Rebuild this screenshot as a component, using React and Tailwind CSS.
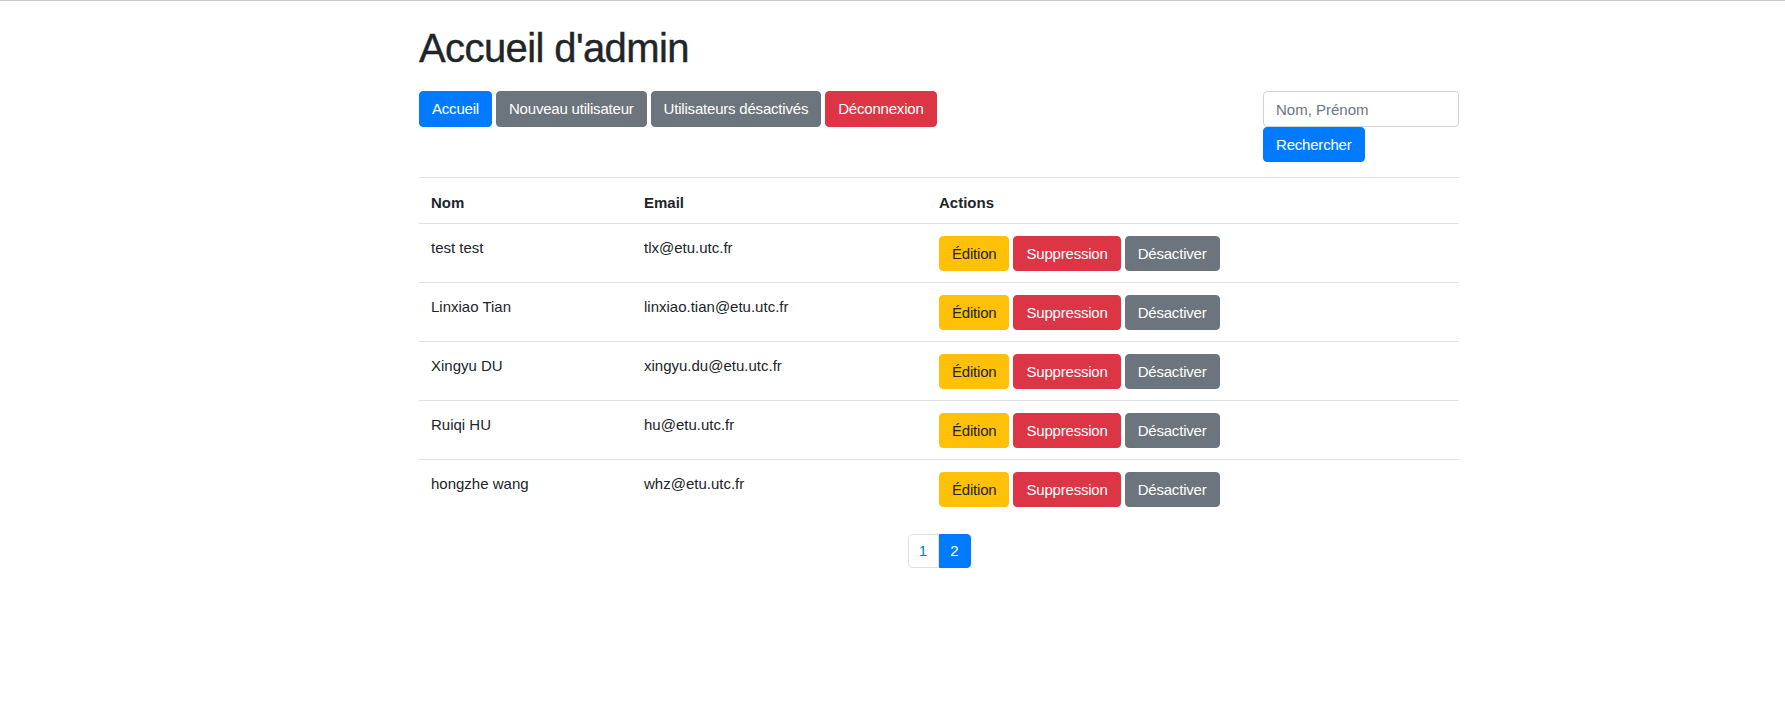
import React from "react";

const users = [
  { name: "test test", email: "tlx@etu.utc.fr" },
  { name: "Linxiao Tian", email: "linxiao.tian@etu.utc.fr" },
  { name: "Xingyu DU", email: "xingyu.du@etu.utc.fr" },
  { name: "Ruiqi HU", email: "hu@etu.utc.fr" },
  { name: "hongzhe wang", email: "whz@etu.utc.fr" },
];

const btn = "px-3 flex items-center rounded-[4px] border text-[15px] leading-6 tracking-[-0.2px]";

const App = () => {
  return (
    <div className="min-h-[720px] bg-white border-t border-[#c8c8c8] text-[#212529] font-['Liberation_Sans',Arial,sans-serif]">
      <div className="ml-[419px] w-[1040px]">
        <h1 className="pt-[23px] text-[40px] leading-[48px] font-normal tracking-[-0.6px] [-webkit-text-stroke:0.4px_#212529]">Accueil d'admin</h1>

        <div className="flex items-start justify-between mt-[19px]">
          <div className="flex gap-1">
            <button className={`${btn} h-[36px] bg-[#007bff] border-[#007bff] text-white`}>Accueil</button>
            <button className={`${btn} h-[36px] bg-[#6c757d] border-[#6c757d] text-white`}>Nouveau utilisateur</button>
            <button className={`${btn} h-[36px] bg-[#6c757d] border-[#6c757d] text-white`}>Utilisateurs désactivés</button>
            <button className={`${btn} h-[36px] bg-[#dc3545] border-[#dc3545] text-white`}>Déconnexion</button>
          </div>
          <form className="flex flex-col items-start w-[196px]" onSubmit={(e) => e.preventDefault()}>
            <input
              className="w-full h-[36px] px-3 border border-[#ced4da] rounded-[4px] text-[15px] outline-none placeholder:text-[#6c757d]"
              type="text"
              placeholder="Nom, Prénom"
            />
            <button className={`${btn} h-[35px] bg-[#007bff] border-[#007bff] text-white`}>Rechercher</button>
          </form>
        </div>

        <table className="w-full mt-[15px] border-collapse text-[15px]">
          <thead>
            <tr className="border-t border-b border-[#dee2e6]">
              <th className="w-[213px] text-left font-bold px-3 pt-[13px] pb-[8px] leading-6 align-top">Nom</th>
              <th className="w-[295px] text-left font-bold px-3 pt-[13px] pb-[8px] leading-6 align-top">Email</th>
              <th className="text-left font-bold px-3 pt-[13px] pb-[8px] leading-6 align-top">Actions</th>
            </tr>
          </thead>
          <tbody>
            {users.map((u, i) => (
              <tr key={i} className={i === 0 ? "" : "border-t border-[#dee2e6]"}>
                <td className="px-3 pt-3 pb-[11px] align-top leading-6">{u.name}</td>
                <td className="px-3 pt-3 pb-[11px] align-top leading-6">{u.email}</td>
                <td className="px-3 pt-3 pb-[11px] align-top">
                  <div className="flex gap-1">
                    <button className={`${btn} h-[35px] bg-[#ffc107] border-[#ffc107] text-[#212529]`}>Édition</button>
                    <button className={`${btn} h-[35px] bg-[#dc3545] border-[#dc3545] text-white`}>Suppression</button>
                    <button className={`${btn} h-[35px] bg-[#6c757d] border-[#6c757d] text-white`}>Désactiver</button>
                  </div>
                </td>
              </tr>
            ))}
          </tbody>
        </table>

        <div className="flex justify-center mt-[16px]">
          <div className="flex text-[15px]">
            <a className="w-[31px] h-[34px] flex items-center justify-center border border-[#dee2e6] rounded-l-[4px] text-[#007bff]" href="#">1</a>
            <a className="w-[32px] h-[34px] flex items-center justify-center border border-[#007bff] bg-[#007bff] rounded-r-[4px] text-white" href="#">2</a>
          </div>
        </div>
      </div>
    </div>
  );
};

export default App;
